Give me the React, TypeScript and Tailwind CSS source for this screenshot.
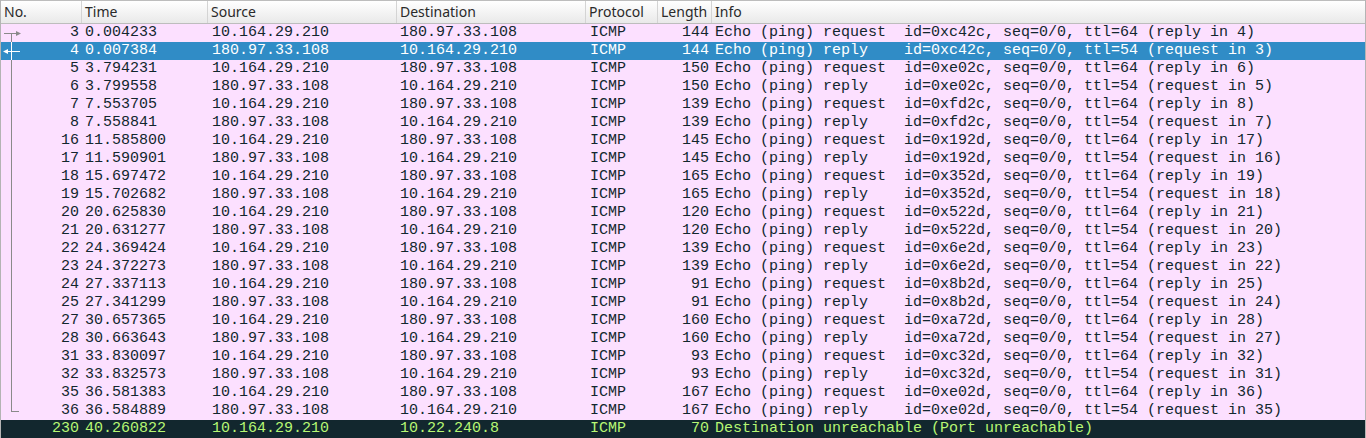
import React from "react";

type Pkt = {
  no: number;
  time: string;
  src: string;
  dst: string;
  len: number;
  info: string;
};

const A = "10.164.29.210";
const B = "180.97.33.108";

// pairs of echo request/reply
const pairs: [number, string, string, number, string, number][] = [
  [3, "0.004233", "0.007384", 144, "0xc42c", 4],
  [5, "3.794231", "3.799558", 150, "0xe02c", 6],
  [7, "7.553705", "7.558841", 139, "0xfd2c", 8],
  [16, "11.585800", "11.590901", 145, "0x192d", 17],
  [18, "15.697472", "15.702682", 165, "0x352d", 19],
  [20, "20.625830", "20.631277", 120, "0x522d", 21],
  [22, "24.369424", "24.372273", 139, "0x6e2d", 23],
  [24, "27.337113", "27.341299", 91, "0x8b2d", 25],
  [27, "30.657365", "30.663643", 160, "0xa72d", 28],
  [31, "33.830097", "33.832573", 93, "0xc32d", 32],
  [35, "36.581383", "36.584889", 167, "0xe02d", 36],
];

const packets: Pkt[] = pairs.flatMap(([req, t1, t2, len, id, rep]) => [
  {
    no: req,
    time: t1,
    src: A,
    dst: B,
    len,
    info: `Echo (ping) request  id=${id}, seq=0/0, ttl=64 (reply in ${rep})`,
  },
  {
    no: rep,
    time: t2,
    src: B,
    dst: A,
    len,
    info: `Echo (ping) reply    id=${id}, seq=0/0, ttl=54 (request in ${req})`,
  },
]);

const cols = "grid grid-cols-[81px_126px_189px_189px_72px_54px_1fr]";
const mono = { fontFamily: '"Liberation Mono", monospace' };

function Tree({ kind, color }: { kind: "first" | "sel" | "mid" | "last"; color: string }) {
  return (
    <svg className="absolute left-0 top-0" width="22" height="18" viewBox="0 0 22 18">
      {kind === "first" && (
        <>
          <line x1="3" y1="9.5" x2="16" y2="9.5" stroke={color} />
          <polygon points="15,7 20,9.5 15,12" fill={color} />
          <line x1="10.5" y1="9.5" x2="10.5" y2="18" stroke={color} />
        </>
      )}
      {kind === "sel" && (
        <>
          <line x1="5" y1="9.5" x2="19" y2="9.5" stroke={color} />
          <polygon points="7,7 2,9.5 7,12" fill={color} />
          <line x1="10.5" y1="0" x2="10.5" y2="18" stroke={color} />
        </>
      )}
      {kind === "mid" && <line x1="10.5" y1="0" x2="10.5" y2="18" stroke={color} />}
      {kind === "last" && (
        <>
          <line x1="10.5" y1="0" x2="10.5" y2="9.5" stroke={color} />
          <line x1="10" y1="9.5" x2="18" y2="9.5" stroke={color} />
        </>
      )}
    </svg>
  );
}

function Row({ p, bg, fg, tree }: { p: Pkt; bg: string; fg: string; tree?: "first" | "sel" | "mid" | "last" }) {
  return (
    <div className={`${cols} h-[18px] leading-[18px] text-[15px] whitespace-pre ${bg} ${fg}`} style={mono}>
      <div className="relative text-right pr-[3px]">
        {tree && <Tree kind={tree} color={tree === "sel" ? "#ffffff" : "#8a8a8a"} />}
        {p.no}
      </div>
      <div className="pl-[3px]">{p.time}</div>
      <div className="pl-[4px]">{p.src}</div>
      <div className="pl-[3px]">{p.dst}</div>
      <div className="pl-[4px]">ICMP</div>
      <div className="text-right pr-[3px]">{p.len}</div>
      <div className="pl-[3px] overflow-hidden">{p.info}</div>
    </div>
  );
}

export default function App() {
  const headers = ["No.", "Time", "Source", "Destination", "Protocol", "Length", "Info"];
  const last: Pkt = {
    no: 230,
    time: "40.260822",
    src: A,
    dst: "10.22.240.8",
    len: 70,
    info: "Destination unreachable (Port unreachable)",
  };

  return (
    <div className="w-[1366px] h-[438px] overflow-hidden bg-white border-x border-[#b4b4b4]">
      <div
        className={`${cols} h-[24px] border-y border-[#bdbdbd] bg-linear-to-b from-white to-[#e9e9e9] text-[14px] text-[#2a2a2a]`}
        style={{ fontFamily: '"Noto Sans", sans-serif' }}
      >
        {headers.map((h, i) => (
          <div
            key={h}
            className={`pl-[3px] leading-[22px] ${i < headers.length - 1 ? "border-r border-[#d4d4d4]" : ""}`}
          >
            {h}
          </div>
        ))}
      </div>
      {packets.map((p, i) => {
        const sel = i === 1;
        const tree = i === 0 ? "first" : sel ? "sel" : i === packets.length - 1 ? "last" : "mid";
        return (
          <Row
            key={p.no}
            p={p}
            bg={sel ? "bg-[#308cc6]" : "bg-[#fce0ff]"}
            fg={sel ? "text-white" : "text-[#12272e]"}
            tree={tree}
          />
        );
      })}
      <Row p={last} bg="bg-[#12272e]" fg="text-[#b7f774]" />
    </div>
  );
}
